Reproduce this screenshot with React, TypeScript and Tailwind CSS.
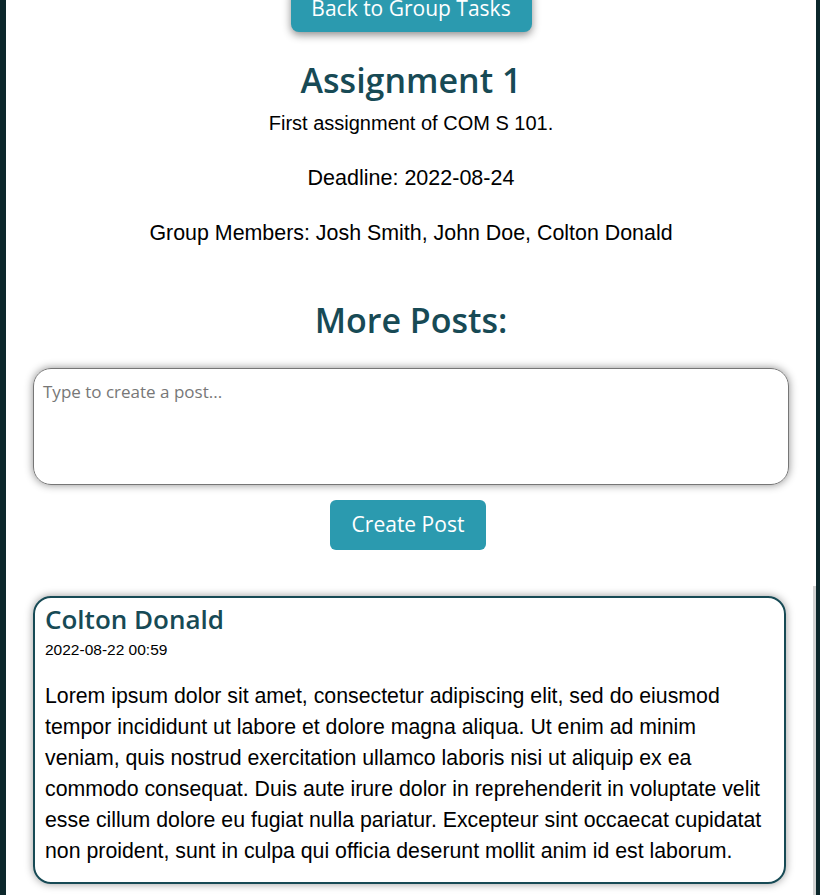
const body = "font-['Liberation_Sans','Arial',sans-serif]";
const head = "font-['Open_Sans','Noto_Sans',sans-serif]";

const LOREM =
  "Lorem ipsum dolor sit amet, consectetur adipiscing elit, sed do eiusmod tempor incididunt ut labore et dolore magna aliqua. Ut enim ad minim veniam, quis nostrud exercitation ullamco laboris nisi ut aliquip ex ea commodo consequat. Duis aute irure dolor in reprehenderit in voluptate velit esse cillum dolore eu fugiat nulla pariatur. Excepteur sint occaecat cupidatat non proident, sunt in culpa qui officia deserunt mollit anim id est laborum.";

export default function App() {
  return (
    <div className="h-[895px] overflow-hidden bg-[#0c272b] pl-[6px] pr-[4px]">
      <div className="flex h-full flex-col items-center bg-white text-black">
        <button
          className={`-mt-[14px] h-[46px] w-[241px] rounded-lg bg-[#2b9aaf] text-[21px] text-white shadow-[0_3px_8px_rgba(0,0,0,0.45)] ${head}`}
        >
          Back to Group Tasks
        </button>

        <h1 className={`mt-[28px] text-[34px] leading-[40px] font-semibold text-[#174a55] ${head}`}>
          Assignment 1
        </h1>
        <p className={`mt-[11px] text-[20px] leading-[24px] ${body}`}>First assignment of COM S 101.</p>
        <p className={`mt-[31px] text-[21.5px] leading-[24px] ${body}`}>Deadline: 2022-08-24</p>
        <p className={`mt-[31px] text-[21.4px] leading-[24px] ${body}`}>
          Group Members: Josh Smith, John Doe, Colton Donald
        </p>

        <h2 className={`mt-[55px] text-[34px] leading-[40px] font-semibold text-[#174a55] ${head}`}>
          More Posts:
        </h2>

        <div className="mt-[28px] w-full px-[27px]">
          <textarea
            placeholder="Type to create a post..."
            className={`block h-[117px] w-full resize-none rounded-[18px] border border-[#767676] px-[9px] py-[12px] text-[17px] leading-[22px] text-black shadow-[0_0_8px_rgba(0,0,0,0.45)] outline-none placeholder:text-[#777] ${head}`}
          />
        </div>

        <button
          className={`mt-[15px] -ml-[6px] h-[50px] w-[156px] rounded-md bg-[#2b9aaf] text-[21px] text-white ${head}`}
        >
          Create Post
        </button>

        <div className="mt-[36px] w-full flex-1 border-r-[3px] border-[#d2d2d2] px-[27px] pt-[10px]">
          <div className="rounded-[18px] border-2 border-[#174a55] px-[10px] pt-[5px] pb-[15px] shadow-[0_0_9px_rgba(0,0,0,0.4)]">
            <h3 className={`text-[26px] leading-[32px] font-semibold text-[#174a55] ${head}`}>
              Colton Donald
            </h3>
            <div className={`mt-[6px] text-[15.5px] leading-[18px] ${body}`}>2022-08-22 00:59</div>
            <p className={`mt-[22px] text-[21.3px] leading-[31px] ${body}`}>{LOREM}</p>
          </div>
        </div>
      </div>
    </div>
  );
}
